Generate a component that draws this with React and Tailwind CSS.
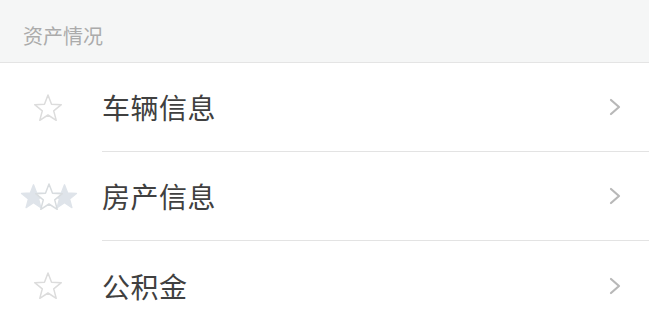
const STAR = '15,2 18.53,11.15 28.31,11.67 20.71,17.85 23.23,27.33 15,22 6.77,27.33 9.29,17.85 1.69,11.67 11.47,11.15';

function Star() {
  return (
    <svg width="30" height="30" viewBox="0 0 30 30">
      <polygon points={STAR} fill="none" stroke="#dcdcdc" strokeWidth="1.5" strokeLinejoin="round" />
    </svg>
  );
}

function MultiStar() {
  return (
    <svg width="58" height="30" viewBox="0 0 58 30" className="-ml-[13px]">
      <g transform="translate(0,1) scale(0.9)">
        <polygon points={STAR} fill="#dfe4ea" stroke="#dfe4ea" strokeWidth="1.5" strokeLinejoin="round" />
      </g>
      <g transform="translate(31,1) scale(0.9)">
        <polygon points={STAR} fill="#dfe4ea" stroke="#dfe4ea" strokeWidth="1.5" strokeLinejoin="round" />
      </g>
      <g transform="translate(14,0)">
        <polygon points={STAR} fill="#ffffff" stroke="#d8dcdf" strokeWidth="1.5" strokeLinejoin="round" />
      </g>
    </svg>
  );
}

function Chevron() {
  return (
    <svg width="14" height="20" viewBox="0 0 14 20">
      <polyline points="3,3 11,10 3,17" fill="none" stroke="#b8b8b8" strokeWidth="2.2" strokeLinecap="round" strokeLinejoin="round" />
    </svg>
  );
}

const rows = [
  { label: '车辆信息', icon: 'star' },
  { label: '房产信息', icon: 'multi' },
  { label: '公积金', icon: 'star' },
];

export default function App() {
  return (
    <div className="w-[649px] h-[323px] overflow-hidden bg-white" style={{ fontFamily: '"Noto Sans CJK SC", "Noto Sans", sans-serif' }}>
      <div className="h-[63px] bg-[#f5f6f6] border-b border-[#e4e4e4] flex items-center pl-[23px] pt-[10px] text-[20px] text-[#ababab]">
        资产情况
      </div>
      {rows.map((r, i) => (
        <div key={r.label} className="flex h-[89px]">
          <div className="w-[102px] shrink-0 flex items-center pl-[33px]">
            {r.icon === 'multi' ? <MultiStar /> : <Star />}
          </div>
          <div className={`flex-1 flex items-center justify-between pr-[27px] ${i < rows.length - 1 ? 'border-b border-[#e3e3e3]' : ''}`}>
            <span className="text-[28px] text-[#404040] tracking-[0.5px]">{r.label}</span>
            <Chevron />
          </div>
        </div>
      ))}
    </div>
  );
}
